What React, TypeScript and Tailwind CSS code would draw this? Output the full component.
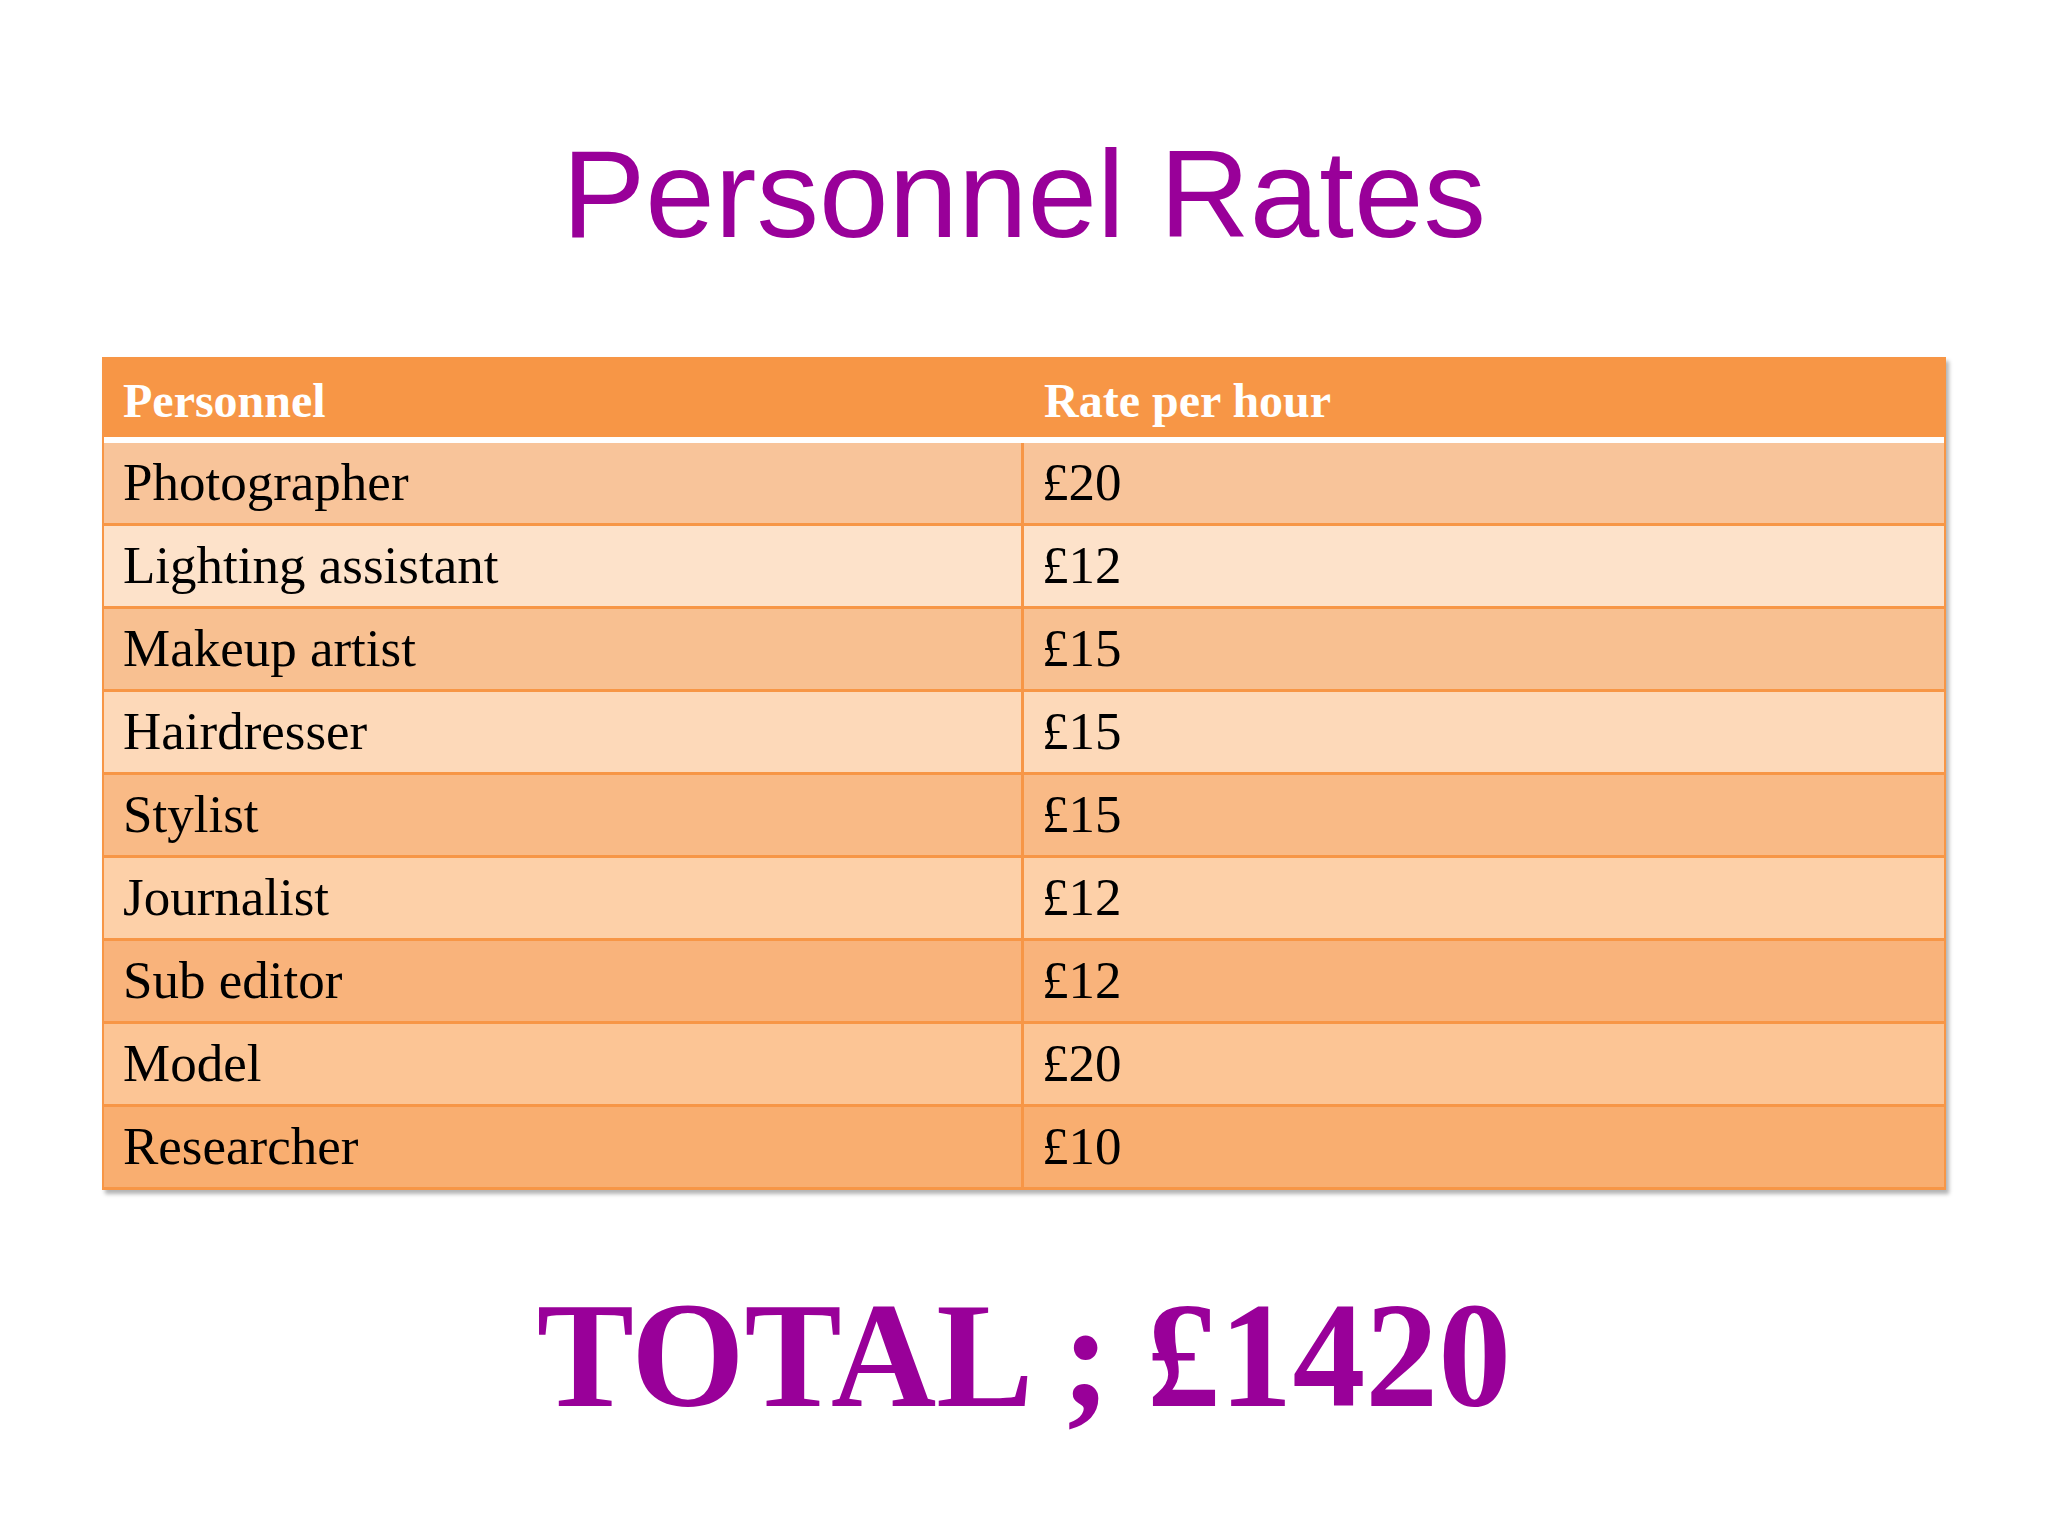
import React from "react";

const rows: { name: string; rate: string; bg: string }[] = [
  { name: "Photographer", rate: "£20", bg: "bg-[#F8C49A]" },
  { name: "Lighting assistant", rate: "£12", bg: "bg-[#FDE2CA]" },
  { name: "Makeup artist", rate: "£15", bg: "bg-[#F8C091]" },
  { name: "Hairdresser", rate: "£15", bg: "bg-[#FDD9B9]" },
  { name: "Stylist", rate: "£15", bg: "bg-[#F9BA86]" },
  { name: "Journalist", rate: "£12", bg: "bg-[#FDD0A8]" },
  { name: "Sub editor", rate: "£12", bg: "bg-[#F9B37B]" },
  { name: "Model", rate: "£20", bg: "bg-[#FCC595]" },
  { name: "Researcher", rate: "£10", bg: "bg-[#F9AE70]" },
];

export default function App() {
  return (
    <div className="w-[2048px] h-[1536px] bg-white flex flex-col items-center overflow-hidden">
      <h1
        className="pt-[131px] text-[125px] leading-none text-[#990099]"
        style={{ fontFamily: '"Liberation Sans", Arial, sans-serif' }}
      >
        Personnel Rates
      </h1>

      <div
        className="mt-[101px] w-[1844px] flex flex-col shadow-[3px_4px_4px_rgba(0,0,0,0.3)]"
        style={{ fontFamily: '"Liberation Serif", "Times New Roman", serif' }}
      >
        <div className="h-[80px] bg-[#F79646] flex items-center text-white font-bold text-[48px] pt-[8px]">
          <div className="w-[922px] pl-[21px]">Personnel</div>
          <div className="flex-1 pl-[20px]">Rate per hour</div>
        </div>
        <div className="h-[6px] bg-white border-x-2 border-[#F79646]" />
        {rows.map((r) => (
          <div
            key={r.name}
            className={`h-[83px] flex border-b-[3px] border-x-2 border-[#F79646] ${r.bg} text-black text-[53px]`}
          >
            <div className="w-[920px] pl-[19px] flex items-center border-r-[3px] border-[#F79646]">
              {r.name}
            </div>
            <div className="flex-1 pl-[18px] flex items-center">{r.rate}</div>
          </div>
        ))}
      </div>

      <div
        className="mt-[90px] text-[151px] leading-none font-bold text-[#990099] scale-x-[0.965] whitespace-nowrap"
        style={{ fontFamily: '"Liberation Serif", "Times New Roman", serif' }}
      >
        TOTAL ; £1420
      </div>
    </div>
  );
}
